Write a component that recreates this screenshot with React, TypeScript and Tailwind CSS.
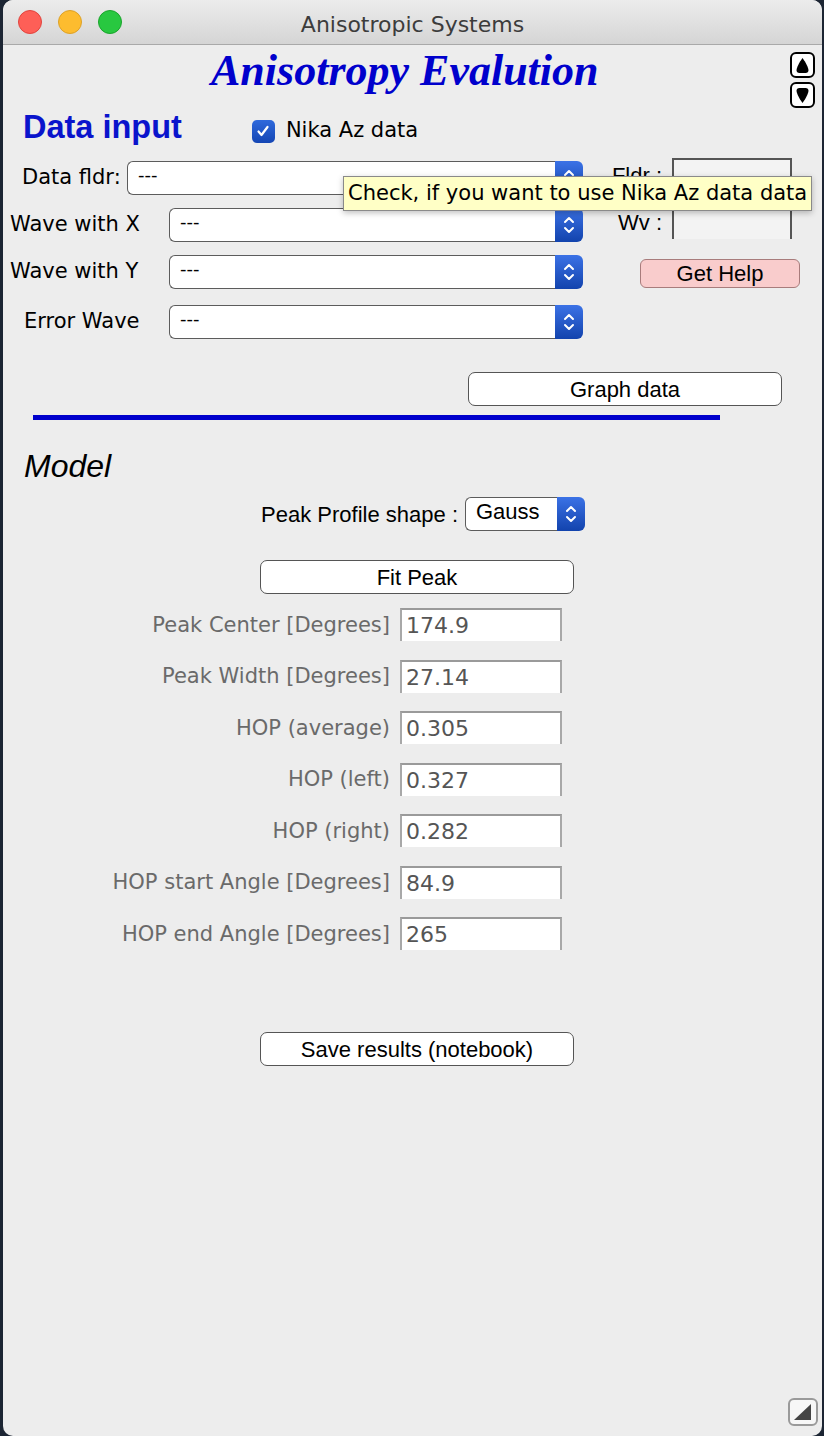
import React from 'react';

const dv = "font-['DejaVu_Sans',sans-serif]";
const lib = "font-['Liberation_Sans',Arial,sans-serif]";

const Stepper = () => (
	<div className="flex h-full w-[28px] shrink-0 items-center justify-center rounded-r-[6px] bg-gradient-to-b from-[#3b72e6] to-[#1243ad]">
		<svg width="12" height="22" viewBox="0 0 12 22" fill="none" stroke="white" strokeWidth="2" strokeLinecap="round" strokeLinejoin="round">
			<polyline points="2,8 6,4 10,8" />
			<polyline points="2,14 6,18 10,14" />
		</svg>
	</div>
);

const Select = ({ w, value = '---', big = false }: { w: string; value?: string; big?: boolean }) => (
	<div className={`flex h-[34px] ${w} shrink-0`}>
		<div className="flex-1 rounded-l-[6px] border-y-[1.5px] border-l-[1.5px] border-[#5c5c5c] bg-white">
			<span
				className={
					big
						? `block pl-[10px] pt-[1px] text-[22px] leading-[26px] text-black ${lib}`
						: `block pl-[10px] pt-[2px] text-[18px] leading-[22px] text-black ${dv}`
				}
			>
				{value}
			</span>
		</div>
		<Stepper />
	</div>
);

const Button = ({ label, className = '' }: { label: string; className?: string }) => (
	<div
		className={`flex h-[34px] w-[314px] items-center justify-center rounded-[7px] border-[1.5px] border-[#555] bg-white text-[22px] text-black ${lib} ${className}`}
	>
		{label}
	</div>
);

const SetVar = () => <div className="h-[34px] w-[120px] border-x-2 border-t-2 border-[#555] bg-[#f3f3f3]" />;

const fields = [
	['Peak Center [Degrees]', '174.9'],
	['Peak Width [Degrees]', '27.14'],
	['HOP (average)', '0.305'],
	['HOP (left)', '0.327'],
	['HOP (right)', '0.282'],
	['HOP start Angle [Degrees]', '84.9'],
	['HOP end Angle [Degrees]', '265'],
];

const ArrowBtn = ({ up }: { up: boolean }) => (
	<div className="flex h-[26px] w-[25px] items-center justify-center rounded-[6px] border-2 border-black bg-white">
		<svg width="15" height="17" viewBox="0 0 15 17">
			{up ? (
				<path d="M7.5 1 C9 3 13 9 13.5 13 Q13.5 16 10.5 16 H4.5 Q1.5 16 1.5 13 C2 9 6 3 7.5 1 Z" fill="black" />
			) : (
				<path d="M7.5 16 C9 14 13 8 13.5 4 Q13.5 1 10.5 1 H4.5 Q1.5 1 1.5 4 C2 8 6 14 7.5 16 Z" fill="black" />
			)}
		</svg>
	</div>
);

export default function App() {
	return (
		<div className="h-[1436px] w-[824px] bg-[#1c2533] pl-[3px] pr-[2px]">
			<div className="relative h-full w-full overflow-hidden rounded-[10px] bg-[#ededed]">
				{/* title bar */}
				<div className="relative flex h-[45px] items-center border-b border-[#a9a9a9] bg-gradient-to-b from-[#ececec] to-[#d5d5d5]">
					<div className="ml-[15px] flex gap-[16px]">
						<span className="h-[24px] w-[24px] rounded-full border border-[#e0443e] bg-[#fe5f57]" />
						<span className="h-[24px] w-[24px] rounded-full border border-[#dca128] bg-[#fdbc2f]" />
						<span className="h-[24px] w-[24px] rounded-full border border-[#1aa42c] bg-[#28c840]" />
					</div>
					<div className={`absolute inset-x-0 pt-[5px] text-center text-[22px] text-[#3c3c3c] ${dv}`}>Anisotropic Systems</div>
				</div>

				{/* header */}
				<div className="flex h-[65px] items-start">
					<h1 className="ml-[208px] mt-[4px] font-['Liberation_Serif',serif] text-[44px] font-bold italic leading-[44px] text-[#0000cc]">
						Anisotropy Evalution
					</h1>
					<div className="ml-auto mr-[7px] mt-[7px] flex flex-col gap-[4px]">
						<ArrowBtn up />
						<ArrowBtn up={false} />
					</div>
				</div>

				{/* data input heading */}
				<div className="flex h-[42px] items-center">
					<span className={`mb-[8px] ml-[20px] text-[32.5px] font-bold leading-[34px] text-[#0a14cc] ${lib}`}>Data input</span>
					<span className="ml-[70px] flex h-[23px] w-[23px] items-center justify-center rounded-[5px] bg-gradient-to-b from-[#2f69dc] to-[#1446b4]">
						<svg width="14" height="14" viewBox="0 0 14 14" fill="none" stroke="white" strokeWidth="2.2" strokeLinecap="round" strokeLinejoin="round">
							<polyline points="2.5,7.5 5.5,11 11.5,3" />
						</svg>
					</span>
					<span className={`ml-[11px] text-[21px] text-black ${dv}`}>Nika Az data</span>
				</div>

				{/* data selectors */}
				<div className="mt-[6px] flex">
					<div className="flex w-[580px] flex-col pt-[3px]">
						<div className="flex items-center">
							<span className={`ml-[19px] w-[105px] text-[21px] text-black ${dv}`}>Data fldr:</span>
							<Select w="w-[456px]" />
						</div>
						<div className="mt-[13px] flex items-center">
							<span className={`ml-[7px] w-[159px] text-[21px] text-black ${dv}`}>Wave with X</span>
							<Select w="w-[414px]" />
						</div>
						<div className="mt-[13px] flex items-center">
							<span className={`ml-[7px] w-[159px] text-[21px] text-black ${dv}`}>Wave with Y</span>
							<Select w="w-[414px]" />
						</div>
						<div className="mt-[16px] flex items-center">
							<span className={`ml-[21px] w-[145px] text-[21px] text-black ${dv}`}>Error Wave</span>
							<Select w="w-[414px]" />
						</div>
					</div>
					<div className="flex flex-col">
						<div className="flex items-center">
							<span className={`w-[89px] pr-[10px] text-right text-[22px] text-black ${lib}`}>Fldr :</span>
							<SetVar />
						</div>
						<div className="mt-[13px] flex items-center">
							<span className={`w-[89px] pr-[10px] text-right text-[22px] text-black ${lib}`}>Wv :</span>
							<SetVar />
						</div>
						<div
							className={`ml-[57px] mt-[20px] flex h-[29px] w-[160px] items-center justify-center rounded-[6px] border-[1.5px] border-[#a87c7c] bg-[#f9cccc] text-[22px] text-black ${lib}`}
						>
							Get Help
						</div>
					</div>
				</div>

				<Button label="Graph data" className="ml-[465px] mt-[33px]" />
				<div className="ml-[30px] mt-[9px] h-[5px] w-[687px] bg-[#0000cc]" />

				{/* model */}
				<div className={`ml-[21px] mt-[30px] h-[32px] text-[32px] italic leading-[32px] text-black ${lib}`}>Model</div>
				<div className="mt-[15px] flex items-center">
					<span className={`w-[462px] pr-[7px] text-right text-[22px] text-black ${lib}`}>Peak Profile shape :</span>
					<Select w="w-[120px]" value="Gauss" big />
				</div>
				<Button label="Fit Peak" className="ml-[257px] mt-[29px]" />

				<div className="mt-[14px] flex flex-col gap-[18.5px]">
					{fields.map(([label, value]) => (
						<div key={label} className="flex h-[33px] items-center">
							<span className={`w-[387px] pt-[2px] text-right text-[21px] text-[#6a6a6a] ${dv}`}>{label}</span>
							<div className="ml-[10px] h-[33px] w-[162px] border-x-2 border-t-2 border-x-[#a8a8a8] border-t-[#9a9a9a] bg-white">
								<span className={`block pl-[4px] pt-[1px] text-[22px] leading-[30px] text-[#555] ${dv}`}>{value}</span>
							</div>
						</div>
					))}
				</div>

				<Button label="Save results (notebook)" className="ml-[257px] mt-[82px]" />

				{/* tooltip */}
				<div className={`absolute left-[340px] top-[176px] flex h-[35px] items-center border border-[#8a8a8a] bg-[#ffffc6] px-[4px] text-[21px] text-black shadow-[0_2px_6px_rgba(0,0,0,0.25)] ${dv}`}>
					Check, if you want to use Nika Az data data
				</div>

				{/* resize grip */}
				<div className="absolute bottom-[10px] right-[4px] flex h-[28px] w-[30px] items-end justify-end rounded-[6px] border-2 border-[#9a9a9a] bg-[#f7f7f7] p-[4px]">
					<svg width="18" height="16" viewBox="0 0 18 16">
						<polygon points="17,0 17,16 0,16" fill="#444" />
					</svg>
				</div>
			</div>
		</div>
	);
}
